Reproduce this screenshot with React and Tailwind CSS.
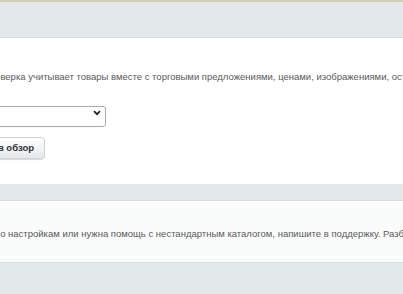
import React from 'react';

const App = () => {
  return (
    <div className="w-[403px] h-[294px] overflow-hidden bg-[#e3e9eb] font-['Liberation_Sans',Arial,sans-serif]">
      {/* top accent line */}
      <div className="h-[2px] bg-[#d6ceae]" />
      <div className="h-[35px]" />

      {/* main panel */}
      <div className="h-[147px] bg-white border-t border-[#d8dee0] pt-[32px]">
        <p className="-ml-[17px] whitespace-nowrap text-[9.5px] leading-[13px] text-[#5a5a5a]">
          Проверка учитывает товары вместе с торговыми предложениями, ценами, изображениями, остатками и свойствами.
        </p>

        <div className="mt-[20px] w-[106px] flex justify-end">
          <div className="relative shrink-0 w-[220px] h-[21px]">
            <select className="w-full h-full appearance-none bg-white border border-[#a9a9a9] rounded-[3px] text-[11px] text-[#333] pl-2 outline-none">
              <option>Основной каталог</option>
            </select>
            <svg className="absolute right-[5px] top-[7px] pointer-events-none" width="8" height="6" viewBox="0 0 8 6">
              <path d="M1 1.2 L4 4.2 L7 1.2" fill="none" stroke="#222" strokeWidth="1.8" />
            </svg>
          </div>
        </div>

        <div className="mt-[13px] w-[45px] flex justify-end">
          <button className="shrink-0 h-[22px] px-[10px] rounded-[4px] border border-[#cdd3d5] bg-gradient-to-b from-white to-[#e4e8ea] shadow-[0_1px_1px_rgba(0,0,0,0.15)] text-[9.5px] font-bold text-[#333] whitespace-nowrap">
            Отправить в обзор
          </button>
        </div>
      </div>

      <div className="h-[16px]" />

      {/* help panel */}
      <div className="h-[63px] bg-[#fafbfb] border-y border-[#d8dee0] flex items-center">
        <p className="-ml-[5px] mt-[3px] whitespace-nowrap text-[9.5px] leading-[13px] text-[#5a5a5a]">
          по настройкам или нужна помощь с нестандартным каталогом, напишите в поддержку. Разберёмся вместе.
        </p>
      </div>
    </div>
  );
};

export default App;
